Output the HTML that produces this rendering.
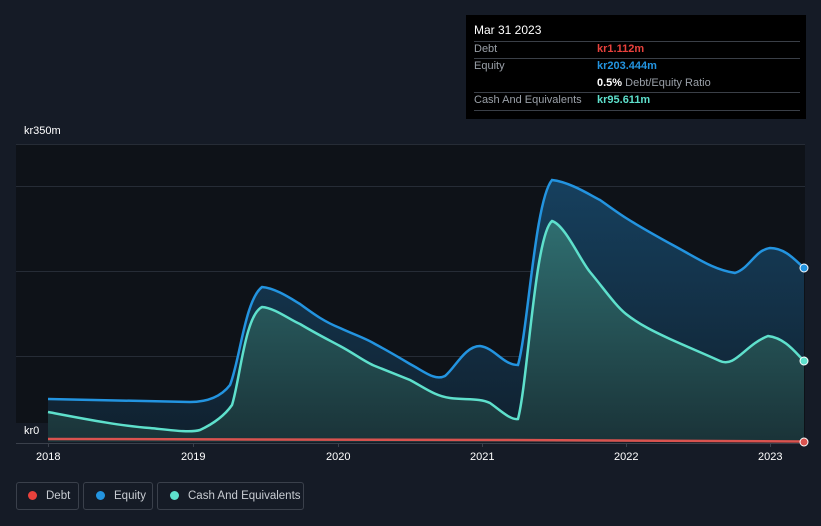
<!DOCTYPE html>
<html><head><meta charset="utf-8"><style>
body{margin:0;width:821px;height:526px;background:#151b26;font-family:"Liberation Sans",sans-serif;overflow:hidden;position:relative}
.tt{position:absolute;left:466px;top:15px;width:340px;height:104px;background:#000;color:#fff;font-size:11px}
.tt .ln{position:absolute;left:8px;right:6px;height:1px;background:#3a3f47}
.tt div{white-space:nowrap}
.lab{color:#9aa0a8}
.leg{position:absolute;top:482px;height:28px;border:1px solid #3a404b;border-radius:3px;color:#c8ccd2;font-size:11.5px;line-height:26px;box-sizing:border-box;white-space:nowrap}
.dot{display:inline-block;width:9px;height:9px;border-radius:50%;margin:0 9px 0 12px;vertical-align:-1px}
.ax{position:absolute;color:#fff;font-size:11px}
</style></head><body>
<svg width="821" height="526" style="position:absolute;left:0;top:0">
<defs>
<linearGradient id="ge" x1="0" y1="0" x2="0" y2="1"><stop offset="0" stop-color="#16405e"/><stop offset="1" stop-color="#10202e"/></linearGradient>
<linearGradient id="gc" x1="0" y1="0" x2="0" y2="1"><stop offset="0" stop-color="#2f6e70"/><stop offset="1" stop-color="#1a3338"/></linearGradient>
</defs>
<rect x="16" y="144" width="789" height="298" fill="#0e1218"/>
<g stroke="#262c36" stroke-width="1">
<line x1="16" y1="144.5" x2="805" y2="144.5"/><line x1="16" y1="186.5" x2="805" y2="186.5"/><line x1="16" y1="271.5" x2="805" y2="271.5"/><line x1="16" y1="356.5" x2="805" y2="356.5"/>
</g>
<path d="M48,399 L190,402 C205,402 220,398 230,385 C240,360 245,300 262,287 C275,288 290,298 300,304 C315,315 325,322 340,328 C355,335 365,338 375,344 C390,352 400,358 410,364 C425,372 435,381 445,376 C455,368 465,346 480,346 C495,348 503,365 518,365 C528,330 535,200 552,180 C570,182 590,195 600,200 C610,207 618,213 626,218 C645,230 660,238 680,249 C700,260 715,270 735,273 C750,268 755,250 770,248 C785,248 795,260 804,268 L804,442 L48,442 Z" fill="url(#ge)"/>
<path d="M48,412 C80,418 120,426 150,428 C170,430 190,433 200,430 C215,423 225,415 232,405 C240,380 245,315 262,307 C275,308 290,320 300,324 C315,333 325,338 340,346 C355,354 365,362 375,366 C390,372 400,376 410,380 C425,388 435,396 450,398 C465,400 480,398 490,403 C500,410 510,420 518,419 C528,380 535,235 552,221 C565,225 580,260 590,272 C605,290 615,305 626,314 C640,325 655,332 670,339 C690,348 700,352 720,361 C735,368 745,345 768,336 C785,338 795,352 804,361 L804,442 L48,442 Z" fill="url(#gc)"/>
<path d="M48,399 L190,402 C205,402 220,398 230,385 C240,360 245,300 262,287 C275,288 290,298 300,304 C315,315 325,322 340,328 C355,335 365,338 375,344 C390,352 400,358 410,364 C425,372 435,381 445,376 C455,368 465,346 480,346 C495,348 503,365 518,365 C528,330 535,200 552,180 C570,182 590,195 600,200 C610,207 618,213 626,218 C645,230 660,238 680,249 C700,260 715,270 735,273 C750,268 755,250 770,248 C785,248 795,260 804,268" fill="none" stroke="#2394e0" stroke-width="2.5"/>
<path d="M48,412 C80,418 120,426 150,428 C170,430 190,433 200,430 C215,423 225,415 232,405 C240,380 245,315 262,307 C275,308 290,320 300,324 C315,333 325,338 340,346 C355,354 365,362 375,366 C390,372 400,376 410,380 C425,388 435,396 450,398 C465,400 480,398 490,403 C500,410 510,420 518,419 C528,380 535,235 552,221 C565,225 580,260 590,272 C605,290 615,305 626,314 C640,325 655,332 670,339 C690,348 700,352 720,361 C735,368 745,345 768,336 C785,338 795,352 804,361" fill="none" stroke="#5ee0cc" stroke-width="2.5"/>
<path d="M48,439 L500,440 L804,441.5" fill="none" stroke="#d9534f" stroke-width="2.5"/>
<line x1="16" y1="443.5" x2="805" y2="443.5" stroke="#3a404b"/>
<g stroke="#3a404b"><line x1="48.5" y1="443" x2="48.5" y2="447"/><line x1="193.5" y1="443" x2="193.5" y2="447"/><line x1="338.5" y1="443" x2="338.5" y2="447"/><line x1="482.5" y1="443" x2="482.5" y2="447"/><line x1="626.5" y1="443" x2="626.5" y2="447"/><line x1="770.5" y1="443" x2="770.5" y2="447"/></g>
<rect x="16" y="423" width="32" height="19" fill="#151b26"/>
<circle cx="804" cy="268" r="4" fill="#2394e0" stroke="#fff" stroke-width="1"/>
<circle cx="804" cy="361" r="4" fill="#5ee0cc" stroke="#fff" stroke-width="1"/>
<circle cx="804" cy="442" r="4" fill="#d9534f" stroke="#fff" stroke-width="1"/>
</svg>
<div class="ax" style="left:24px;top:125px">kr350m</div>
<div class="ax" style="left:24px;top:425px">kr0</div>
<div class="ax" style="left:36px;top:451px">2018</div>
<div class="ax" style="left:181px;top:451px">2019</div>
<div class="ax" style="left:326px;top:451px">2020</div>
<div class="ax" style="left:470px;top:451px">2021</div>
<div class="ax" style="left:614px;top:451px">2022</div>
<div class="ax" style="left:758px;top:451px">2023</div>
<div class="tt">
<div style="position:absolute;left:8px;top:8px;font-size:12px">Mar 31 2023</div>
<div class="ln" style="top:26px"></div>
<div class="ln" style="top:43px"></div>
<div class="ln" style="top:77px"></div>
<div class="ln" style="top:95px"></div>
<div class="lab" style="position:absolute;left:8px;top:28px">Debt</div>
<div style="position:absolute;left:131px;top:28px;color:#e8413c;font-weight:bold">kr1.112m</div>
<div class="lab" style="position:absolute;left:8px;top:45px">Equity</div>
<div style="position:absolute;left:131px;top:45px;color:#2394e0;font-weight:bold">kr203.444m</div>
<div style="position:absolute;left:131px;top:62px"><b>0.5%</b> <span class="lab">Debt/Equity Ratio</span></div>
<div class="lab" style="position:absolute;left:8px;top:79px">Cash And Equivalents</div>
<div style="position:absolute;left:131px;top:79px;color:#5ee0cc;font-weight:bold">kr95.611m</div>
</div>
<div class="leg" style="left:16px;width:63px"><span class="dot" style="background:#e8413c;margin-left:11px"></span>Debt</div>
<div class="leg" style="left:83px;width:70px"><span class="dot" style="background:#2394e0"></span>Equity</div>
<div class="leg" style="left:157px;width:147px"><span class="dot" style="background:#5ee0cc"></span>Cash And Equivalents</div>
</body></html>
